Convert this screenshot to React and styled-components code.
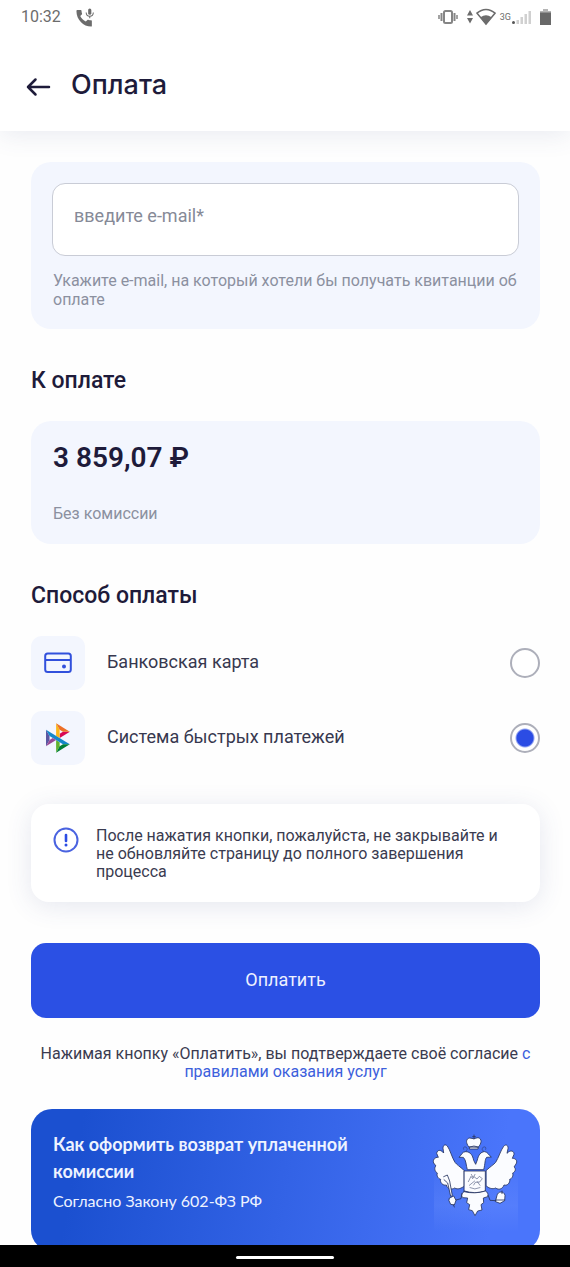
import React, { useState } from "react";
import styled, { createGlobalStyle } from "styled-components";

const GlobalStyle = createGlobalStyle`
  *, *::before, *::after { box-sizing: border-box; }
  html, body { margin: 0; background: #fff; }
  body, button, input { font-family: Roboto, "Noto Sans", sans-serif; }
  h1, h2, p { margin: 0; }
`;

const Screen = styled.div`
  display: flex;
  flex-direction: column;
  height: 100vh;
  background: #fefefe;
  color: #1e1b3a;
`;

const StatusBar = styled.div`
  display: flex;
  align-items: center;
  justify-content: space-between;
  height: 34px;
  padding: 0 19px 0 21px;
  color: #6c6c6c;
  font-size: 16px;
  line-height: 20px;
`;

const StatusGroup = styled.div`
  display: flex;
  align-items: center;
  gap: ${(p) => p.$gap}px;
`;

const Header = styled.header`
  position: relative;
  z-index: 1;
  flex: none;
  background: #fff;
  box-shadow: 0 4px 24px rgba(60, 80, 140, 0.11);
`;

const TitleRow = styled.div`
  display: flex;
  align-items: center;
  gap: 20px;
  height: 97px;
  padding: 4px 26px 0;
`;

const BackButton = styled.button`
  display: flex;
  padding: 4px 0 0;
  border: 0;
  background: none;
  color: #1e1b3a;
  cursor: pointer;
`;

const Title = styled.h1`
  font-family: Inter, sans-serif;
  font-size: 27px;
  font-weight: 500;
  line-height: 36px;
`;

const Content = styled.main`
  flex: 1;
  min-height: 0;
  overflow-y: auto;
  scrollbar-width: none;
  padding: 31px 30px 0 31px;
`;

const Card = styled.section`
  padding: 21px 21px 20px;
  border-radius: 20px;
  background: #f3f6fe;
`;

const EmailInput = styled.input`
  display: block;
  width: 100%;
  height: 73px;
  padding: 0 20px 8px 21px;
  border: 1px solid #c9ccd6;
  border-radius: 13px;
  outline: none;
  background: #fff;
  color: #1e1b3a;
  font-size: 18px;
  &::placeholder { color: #868a97; opacity: 1; }
`;

const Hint = styled.label`
  display: block;
  margin: 15px 0 0 1px;
  color: #8b90a0;
  font-size: 16px;
  line-height: 19px;
`;

const SectionTitle = styled.h2`
  margin: 37px 0 25px;
  font-size: 23px;
  font-weight: 500;
  line-height: 30px;
`;

const Amount = styled.p`
  padding-left: 1px;
  font-size: 28px;
  font-weight: 600;
  line-height: 32px;
`;

const Commission = styled.p`
  margin-top: 30px;
  padding-left: 1px;
  color: #8b90a0;
  font-size: 16px;
  line-height: 20px;
`;

const Methods = styled.div`
  display: flex;
  flex-direction: column;
  gap: 21px;
`;

const Method = styled.label`
  display: flex;
  align-items: center;
  gap: 22px;
  color: #37384f;
  font-size: 18px;
  line-height: 22px;
  cursor: pointer;
`;

const MethodIcon = styled.span`
  display: flex;
  align-items: center;
  justify-content: center;
  width: 54px;
  height: 54px;
  border-radius: 11px;
  background: #f3f6fe;
`;

const MethodName = styled.span`
  flex: 1;
  padding-bottom: 2px;
`;

const Radio = styled.input`
  appearance: none;
  width: 30px;
  height: 30px;
  margin: 0;
  border: 2px solid #adafba;
  border-radius: 50%;
  background: #fff;
  cursor: pointer;
  &:checked {
    background: radial-gradient(circle, #2b4ce4 0 8px, #fff 10px);
  }
`;

const Notice = styled.aside`
  display: flex;
  align-items: flex-start;
  gap: 17px;
  margin-top: 39px;
  padding: 23px 30px 21px 22px;
  border-radius: 18px;
  background: #fff;
  box-shadow: 0 4px 26px rgba(60, 80, 140, 0.13);
  color: #3a3b50;
  font-size: 16px;
  line-height: 18px;
`;

const NoticeIcon = styled.svg`
  flex: none;
`;

const PayButton = styled.button`
  display: block;
  width: 100%;
  height: 75px;
  margin-top: 41px;
  padding: 0 0 2px;
  border: 0;
  border-radius: 15px;
  background: #2b50e4;
  color: #eef1ff;
  font-size: 18px;
  cursor: pointer;
`;

const Agreement = styled.p`
  margin-top: 27px;
  color: #3a3b50;
  font-size: 16px;
  line-height: 18px;
  text-align: center;
`;

const RulesLink = styled.a`
  color: #3c60dc;
  text-decoration: none;
`;

const Banner = styled.a`
  display: flex;
  justify-content: space-between;
  margin-top: 28px;
  padding: 22px 21px 19px 22px;
  border-radius: 21px;
  background: linear-gradient(100deg, #1b50d0 10%, #4a75fb 90%);
  color: #eef3ff;
  font-family: Lato, sans-serif;
  text-decoration: none;
`;

const BannerText = styled.span`
  display: flex;
  flex-direction: column;
  gap: 4px;
  max-width: 320px;
  font-size: 16px;
  line-height: 24px;
`;

const BannerTitle = styled.strong`
  font-size: 18px;
  font-weight: 700;
  line-height: 27px;
`;

const EagleArt = styled.svg`
  flex: none;
  margin-top: 3px;
`;

const NavBar = styled.footer`
  display: flex;
  flex: none;
  align-items: center;
  justify-content: center;
  height: 22px;
  padding-top: 2px;
  background: #000;
`;

const NavHandle = styled.span`
  width: 98px;
  height: 3px;
  border-radius: 2px;
  background: #fff;
`;

function CallMicIcon() {
  return (
    <svg width="18" height="19" viewBox="0 0 17 18" fill="currentColor" aria-hidden="true">
      <path d="M1 2h3.600c.3 0 .6.200.6.600 0 1 .2 1.900.5 2.700.1.300 0 .6-.2.800L4 7.600c1.100 2.200 3 4.100 5.300 5.300l1.500-1.600c.200-.2.500-.3.800-.2.900.300 1.800.500 2.800.500.300 0 .6.200.6.600V17c0 .400-.3.600-.6.600C6.900 17.600.400 11 .400 3c0-.6.200-1 .6-1z" />
      <rect x="11.500" y="0.500" width="3" height="6" rx="1.500" />
      <path d="M9.600 4.200c.200 4.700 6.600 4.700 6.800 0M13 7.700v2.100" fill="none" stroke="currentColor" strokeWidth="1" />
    </svg>
  );
}

function VibrateIcon() {
  return (
    <svg width="20" height="16" viewBox="0 0 20 16" fill="none" stroke="#858585" aria-hidden="true">
      <rect x="6" y="2" width="8" height="12" rx="1.500" strokeWidth="2" />
      <path d="M3.500 4v8M16.500 4v8" strokeWidth="2" />
      <path d="M1 6v4M19 6v4" strokeWidth="1.500" />
    </svg>
  );
}

function WifiIcon() {
  return (
    <svg width="30" height="18" viewBox="0 0 30 18" aria-hidden="true">
      <path d="M1 7.500 4 2l3 5.500zM1 10h6l-3 5.500z" fill="currentColor" />
      <path d="M11 5.200C16.500 .2 23.500 .2 29 5.200L20 16z" fill="#fff" stroke="currentColor" strokeWidth="1.600" />
      <path d="M14.500 9.200c3.700-2.700 7.300-2.700 11 0L20 16.500z" fill="currentColor" />
    </svg>
  );
}

const NetworkLabel = styled.span`
  font-size: 9px;
  line-height: 12px;
`;

function SignalIcon() {
  return (
    <svg width="20" height="16" viewBox="0 0 20 16" aria-hidden="true">
      <circle cx="1.500" cy="13.500" r="1.500" fill="#555" />
      <path d="M4.500 11h2.500v4H4.500zM8.500 8H11v7H8.500zM12.500 5H15v10h-2.500zM16.500 2H19v13h-2.500z" fill="#d0d0d0" />
    </svg>
  );
}

function BatteryIcon() {
  return (
    <svg width="11" height="16" viewBox="0 0 11 16" aria-hidden="true">
      <path d="M3 0h5v2h3v2H0V2h3z" fill="#b5b5b5" />
      <path d="M0 3.500h11V16H0z" fill="#686868" />
    </svg>
  );
}

function ArrowIcon() {
  return (
    <svg width="25" height="20" viewBox="0 0 25 20" fill="none" stroke="currentColor" strokeWidth="2.500" strokeLinecap="round" strokeLinejoin="round" aria-hidden="true">
      <path d="M9.500 2.500 2 10l7.500 7.500M2 10h21" />
    </svg>
  );
}

function CardIcon() {
  return (
    <svg width="28" height="22" viewBox="0 0 28 22" aria-hidden="true">
      <rect x="1.200" y="1.500" width="25.600" height="18.600" rx="2.500" fill="none" stroke="#3150dc" strokeWidth="2" />
      <path d="M1.200 8h25.600" stroke="#3150dc" strokeWidth="2" />
      <circle cx="20" cy="14.500" r="2" fill="#3150dc" />
    </svg>
  );
}

function FastPaymentIcon() {
  return (
    <svg width="24" height="30" viewBox="0 0 98 120" aria-hidden="true">
      <path d="M0 26.120l14.532 25.975v15.844L.017 93.863z" fill="#5b57a2" />
      <path d="M55.797 42.643l13.617-8.346 27.868-.026-41.485 25.414z" fill="#d90751" />
      <path d="M55.720 25.967l.077 34.390-14.566-8.950V0z" fill="#fab718" />
      <path d="M97.282 34.271l-27.869.026-13.693-8.330L41.231 0z" fill="#ed6f26" />
      <path d="M55.797 94.007V77.322l-14.566-8.780.008 51.458z" fill="#63b22f" />
      <path d="M69.380 85.737L14.531 52.095 0 26.120l97.223 59.583z" fill="#1487c9" />
      <path d="M41.240 120l14.556-25.993 13.583-8.270 27.843-.034z" fill="#017f36" />
      <path d="M.017 93.863l41.333-25.320-13.896-8.526-12.922 7.922z" fill="#984995" />
    </svg>
  );
}

function EagleIcon() {
  return (
    <EagleArt width="87" height="98" viewBox="65 105 261 294" aria-hidden="true">
      <defs>
        <linearGradient id="eagleGlow" x1="0" y1="0" x2="0" y2="1">
          <stop offset="0" stopColor="#7b9cff" stopOpacity="0" />
          <stop offset="0.6" stopColor="#7b9cff" stopOpacity="0.22" />
          <stop offset="1" stopColor="#7b9cff" stopOpacity="0" />
        </linearGradient>
      </defs>
      <path d="M71 200h252v199H71z" fill="url(#eagleGlow)" />
      <g fill="#fbfcff" stroke="#27345f" strokeWidth="2.500" strokeLinejoin="round" strokeLinecap="round">
        <path d="M161 214C148 202 139 197 134 190 125 176 119 152 111 141 104 134 98 139 98 148L100 162C91 151 81 152 79 163L84 175C74 174 66 183 70 192L77 201C71 205 73 218 81 222 78 229 83 239 91 241 88 250 98 261 108 258 111 270 124 273 133 267 143 273 154 267 161 262Z" />
        <path d="M228 214C241 202 250 197 256 190 265 176 271 154 280 142 287 134 294 139 293 149L290 163C301 151 312 156 311 166L306 178C318 178 322 187 317 195L311 204C318 209 315 219 307 222 310 230 305 239 298 241 300 252 291 261 281 258 277 270 265 274 256 267 246 272 235 267 228 261Z" />
        <path d="M147 174C154 168 155 158 166 158 181 158 187 170 190 184L196 196 201 183C204 169 211 158 223 158 233 159 235 169 243 174L229 175C223 181 225 194 220 212H171C167 199 168 184 160 176Z" />
        <path d="M162 216H225V276Q194 286 162 276Z" />
        <path d="M161 278C154 282 151 292 158 296L172 297 169 311 178 317 175 332 186 335 194 350 202 336 215 333 212 317 220 311 219 297 232 293C235 284 231 279 225 276Q194 286 161 278Z" />
        <path d="M175 143C166 132 166 119 178 117L190 119 203 116C216 119 214 134 204 144ZM178 144Q191 138 204 144L203 150H178Z" />
        <path d="M100 233 111 228 118 246 126 290 121 292 112 252 101 242M118 297 130 291 137 304 132 318 121 316 116 305Z" />
        <path d="M260 289C262 276 281 275 284 289L283 305 269 313 256 308Z" />
      </g>
      <g fill="none" stroke="#27345f" strokeWidth="2.500" strokeLinecap="round">
        <path d="M191 108v12M187 113h8M129 317l3 7M137 303l15-4 3-16M234 290l5 14 18 1M275 276v8M258 303h25" />
        <path d="M160 151q-3-9 7-7 8 8-1 13M226 151q3-9-7-7-8 8 1 13" strokeWidth="1.500" />
        <path d="M174 248l8-16 5 7 7-13M177 259l16-13M191 233l9 7 7-8 9 7-8 10-13 1-5 8M179 266q14 8 30 0M201 248l8 11M183 226l5 9" strokeWidth="1.500" />
      </g>
    </EagleArt>
  );
}

export default function App() {
  const [method, setMethod] = useState("sbp");
  const [email, setEmail] = useState("");

  return (
    <Screen>
      <GlobalStyle />
      <Header>
        <StatusBar>
          <StatusGroup $gap={15}>
            <span>10:32</span>
            <CallMicIcon />
          </StatusGroup>
          <StatusGroup $gap={8}>
            <VibrateIcon />
            <StatusGroup $gap={4}>
              <WifiIcon />
              <StatusGroup $gap={1}>
                <NetworkLabel>3G</NetworkLabel>
                <SignalIcon />
              </StatusGroup>
            </StatusGroup>
            <BatteryIcon />
          </StatusGroup>
        </StatusBar>
        <TitleRow>
          <BackButton type="button" aria-label="Назад">
            <ArrowIcon />
          </BackButton>
          <Title>Оплата</Title>
        </TitleRow>
      </Header>

      <Content>
        <Card>
          <EmailInput
            id="email"
            type="email"
            placeholder="введите e-mail*"
            value={email}
            onChange={(e) => setEmail(e.target.value)}
          />
          <Hint htmlFor="email">
            Укажите e-mail, на который хотели бы получать квитанции об оплате
          </Hint>
        </Card>

        <SectionTitle>К оплате</SectionTitle>
        <Card>
          <Amount>3 859,07 ₽</Amount>
          <Commission>Без комиссии</Commission>
        </Card>

        <SectionTitle>Способ оплаты</SectionTitle>
        <Methods>
          <Method>
            <MethodIcon><CardIcon /></MethodIcon>
            <MethodName>Банковская карта</MethodName>
            <Radio type="radio" name="method" checked={method === "card"} onChange={() => setMethod("card")} />
          </Method>
          <Method>
            <MethodIcon><FastPaymentIcon /></MethodIcon>
            <MethodName>Система быстрых платежей</MethodName>
            <Radio type="radio" name="method" checked={method === "sbp"} onChange={() => setMethod("sbp")} />
          </Method>
        </Methods>

        <Notice>
          <NoticeIcon width="26" height="26" viewBox="0 0 26 26" aria-hidden="true">
            <circle cx="13" cy="13" r="11.500" fill="none" stroke="#4a63e0" strokeWidth="2" />
            <path d="M13 8v6" stroke="#2b4ce4" strokeWidth="2.600" strokeLinecap="round" />
            <circle cx="13" cy="18" r="1.500" fill="#2b4ce4" />
          </NoticeIcon>
          <p>
            После нажатия кнопки, пожалуйста, не закрывайте и не обновляйте страницу до полного завершения процесса
          </p>
        </Notice>

        <PayButton type="button">Оплатить</PayButton>
        <Agreement>
          Нажимая кнопку «Оплатить», вы подтверждаете своё согласие{" "}
          <RulesLink href="#rules">с правилами оказания услуг</RulesLink>
        </Agreement>

        <Banner href="#refund">
          <BannerText>
            <BannerTitle>Как оформить возврат уплаченной комиссии</BannerTitle>
            <span>Согласно Закону 602-ФЗ РФ</span>
          </BannerText>
          <EagleIcon />
        </Banner>
      </Content>

      <NavBar>
        <NavHandle />
      </NavBar>
    </Screen>
  );
}
